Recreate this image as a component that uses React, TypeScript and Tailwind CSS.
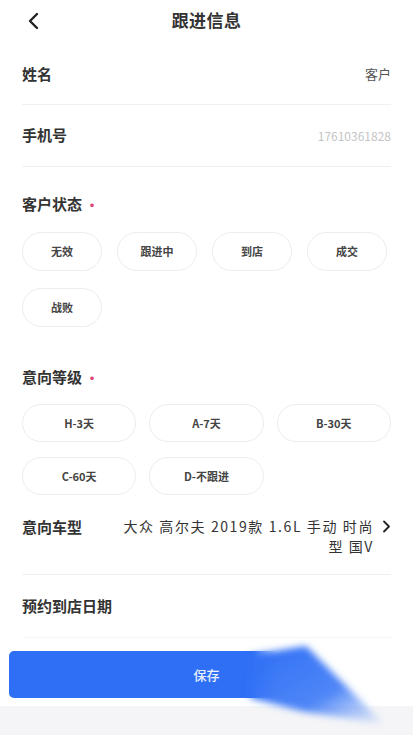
import React, { useState } from "react";

const statusOptions = ["无效", "跟进中", "到店", "成交", "战败"];
const levelOptions = ["H-3天", "A-7天", "B-30天", "C-60天", "D-不跟进"];

const font = { fontFamily: '"Noto Sans CJK SC", "Noto Sans", sans-serif' };

const Chip = ({ label, className }: { label: string; className: string }) => (
  <button
    className={`flex items-center justify-center rounded-full border border-[#ececec] bg-white text-[11px] font-semibold text-[#444] ${className}`}
  >
    {label}
  </button>
);

const App = () => {
  const [status] = useState("");
  const [level] = useState("");

  return (
    <div className="relative h-[735px] w-[413px] overflow-hidden bg-white text-[#333]" style={font}>
      {/* Header */}
      <div className="relative flex h-[44px] items-center justify-center">
        <svg className="absolute left-[26px] top-[12px]" width="14" height="18" viewBox="0 0 14 18" fill="none">
          <path d="M11 2 L4 9 L11 16" stroke="#222" strokeWidth="2.4" strokeLinecap="round" strokeLinejoin="round" />
        </svg>
        <h1 className="-mt-[4px] text-[17px] font-bold tracking-wide text-[#333]">跟进信息</h1>
      </div>

      <div className="px-[22px]">
        {/* 姓名 */}
        <div className="flex h-[61px] items-center justify-between border-b border-[#f0f0f0]">
          <span className="text-[15px] font-semibold">姓名</span>
          <span className="text-[13px] text-[#555]">客户</span>
        </div>

        {/* 手机号 */}
        <div className="flex h-[62px] items-center justify-between border-b border-[#f0f0f0]">
          <span className="text-[15px] font-semibold">手机号</span>
          <span className="text-[12px] text-[#c4c4c4]">17610361828</span>
        </div>

        {/* 客户状态 */}
        <div className="pt-[26px]">
          <div className="flex h-[22px] items-center text-[15px] font-semibold">
            客户状态<span className="ml-[3px] text-[14px] text-[#e0457b]">•</span>
          </div>
          <div className="mt-[17px] flex flex-wrap gap-x-[15px] gap-y-[17px]" data-value={status}>
            {statusOptions.map((s) => (
              <Chip key={s} label={s} className="h-[39px] w-[80px]" />
            ))}
          </div>
        </div>

        {/* 意向等级 */}
        <div className="pt-[39px]">
          <div className="flex h-[22px] items-center text-[15px] font-semibold">
            意向等级<span className="ml-[3px] text-[14px] text-[#e0457b]">•</span>
          </div>
          <div className="mt-[16px] grid grid-cols-3 gap-x-[13px] gap-y-[15px]" data-value={level}>
            {levelOptions.map((l) => (
              <Chip key={l} label={l} className="h-[38px] w-full" />
            ))}
          </div>
        </div>

        {/* 意向车型 */}
        <div className="flex items-start justify-between border-b border-[#f0f0f0] pb-[18px] pt-[21px]">
          <span className="text-[15px] font-semibold leading-[22px]">意向车型</span>
          <div className="flex items-start">
            <span className="text-right text-[14px] leading-[20px] tracking-[1.6px] text-[#333]">
              大众 高尔夫 2019款 1.6L 手动 时尚
              <br />
              型 国V
            </span>
            <svg className="ml-[8px] mt-[4px]" width="9" height="13" viewBox="0 0 9 13" fill="none">
              <path d="M2 1.5 L7 6.5 L2 11.5" stroke="#222" strokeWidth="1.8" strokeLinecap="round" strokeLinejoin="round" />
            </svg>
          </div>
        </div>

        {/* 预约到店日期 */}
        <div className="flex h-[63px] items-center border-b border-[#f6f6f6]">
          <span className="text-[15px] font-semibold">预约到店日期</span>
        </div>
      </div>

      {/* Save button */}
      <div className="px-[9px] pt-[13px]">
        <button className="h-[47px] w-full rounded-l-[5px] bg-[linear-gradient(90deg,#2f6ff5_0%,#2f6ff5_62%,rgba(47,111,245,0)_68%)] text-[13px] font-medium text-white/90">
          保存
        </button>
      </div>
      <div className="mt-[8px] h-[40px] bg-[#f5f5f7]" />

      {/* motion-blur streak trailing the button */}
      <svg className="pointer-events-none absolute left-0 top-0" width="413" height="735" viewBox="0 0 413 735">
        <defs>
          <linearGradient id="streak" x1="0" y1="0" x2="1" y2="1">
            <stop offset="0" stopColor="#2f6ff5" stopOpacity="1" />
            <stop offset="0.6" stopColor="#3a78f6" stopOpacity="0.9" />
            <stop offset="1" stopColor="#6a9cf8" stopOpacity="0.1" />
          </linearGradient>
          <filter id="soft" x="-20%" y="-20%" width="140%" height="140%">
            <feGaussianBlur stdDeviation="3.5" />
          </filter>
        </defs>
        <path d="M250 655 L306 646 L384 724 L305 712 L250 698 Z" fill="url(#streak)" filter="url(#soft)" />
      </svg>
    </div>
  );
};

export default App;
